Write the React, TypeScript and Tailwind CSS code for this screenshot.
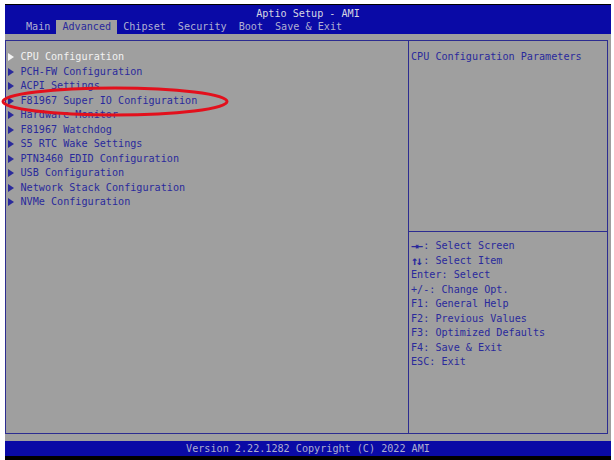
import React from "react";

const items = [
  "CPU Configuration",
  "PCH-FW Configuration",
  "ACPI Settings",
  "F81967 Super IO Configuration",
  "Hardware Monitor",
  "F81967 Watchdog",
  "S5 RTC Wake Settings",
  "PTN3460 EDID Configuration",
  "USB Configuration",
  "Network Stack Configuration",
  "NVMe Configuration",
];

const help = [
  "→←: Select Screen",
  "↑↓: Select Item",
  "Enter: Select",
  "+/-: Change Opt.",
  "F1: General Help",
  "F2: Previous Values",
  "F3: Optimized Defaults",
  "F4: Save & Exit",
  "ESC: Exit",
];

const tabs = ["Main", "Advanced", "Chipset", "Security", "Boot", "Save & Exit"];

function Arrow({ white }: { white?: boolean }) {
  return (
    <svg width="6" height="8" viewBox="0 0 6 8" className="shrink-0">
      <path d="M0 0 L6 4 L0 8 Z" fill={white ? "#f4f4f4" : "#2a2a9c"} />
    </svg>
  );
}

export default function App() {
  return (
    <div
      className="relative w-[614px] h-[460px] bg-white overflow-hidden text-[10.15px] leading-[14.5px]"
      style={{ fontFamily: '"DejaVu Sans Mono", "Liberation Mono", monospace' }}
    >
      <div className="ml-[5px] mr-[3px] mt-[4px] flex flex-col h-[456px]">
        {/* header */}
        <div className="h-[30px] bg-[#0a0aa6] border-t border-black flex flex-col pt-[2px]">
          <div className="h-[13px] flex items-center justify-center text-[#d6d6e2] leading-[13px]">
            Aptio Setup - AMI
          </div>
          <div className="h-[14px] flex items-stretch pl-[15px] text-[#b0b0d2] leading-[14px]">
            {tabs.map((t) => (
              <div
                key={t}
                className={
                  t === "Advanced"
                    ? "px-[6px] bg-[#9f9f9f] text-[#2a2a9c] whitespace-pre"
                    : "px-[6px] whitespace-pre"
                }
              >
                {t}
              </div>
            ))}
          </div>
        </div>
        {/* body */}
        <div className="h-[407px] bg-[#9f9f9f] pt-[6px] pr-[3px]">
          <div className="h-[394px] border-[1.5px] border-[#2c2c90] flex">
            <div className="w-[403px] border-r-[1.5px] border-[#2c2c90] pt-[9px] pl-[1.5px]">
              {items.map((it, i) => (
                <div key={it} className="flex items-center h-[14.5px]">
                  <Arrow white={i === 0} />
                  <span
                    className={
                      i === 0
                        ? "ml-[7px] text-[#f2f2f2] whitespace-pre"
                        : "ml-[7px] text-[#2a2a9c] whitespace-pre"
                    }
                  >
                    {it}
                  </span>
                </div>
              ))}
            </div>
            <div className="flex-1 flex flex-col">
              <div className="h-[191px] border-b-[1.5px] border-[#2c2c90] pt-[9px] pl-[2px] text-[#2a2a9c] whitespace-pre">
                CPU Configuration Parameters
              </div>
              <div className="pt-[7px] pl-[2px] text-[#2a2a9c]">
                {help.map((h, i) => (
                  <div key={h} className="h-[14.5px] whitespace-pre flex items-center">
                    {i < 2 ? (
                      <>
                        <span className="inline-block w-[12.2px] overflow-visible text-[12px] font-bold tracking-[-2.5px] leading-[14.5px]">
                          {h.slice(0, 2)}
                        </span>
                        <span>{h.slice(2)}</span>
                      </>
                    ) : (
                      h
                    )}
                  </div>
                ))}
              </div>
            </div>
          </div>
        </div>
        {/* footer */}
        <div className="h-[15px] bg-[#0a0aa6] flex items-center justify-center text-[#aeaed0] leading-[15px]">
          Version 2.22.1282 Copyright (C) 2022 AMI
        </div>
        <div className="h-[4px] bg-black" />
      </div>
      {/* red annotation ellipse */}
      <svg
        className="absolute left-0 top-0 pointer-events-none"
        width="614"
        height="460"
        viewBox="0 0 614 460"
      >
        <ellipse
          cx="115"
          cy="101.5"
          rx="112"
          ry="13.5"
          fill="none"
          stroke="#e3101c"
          strokeWidth="3"
        />
      </svg>
    </div>
  );
}
